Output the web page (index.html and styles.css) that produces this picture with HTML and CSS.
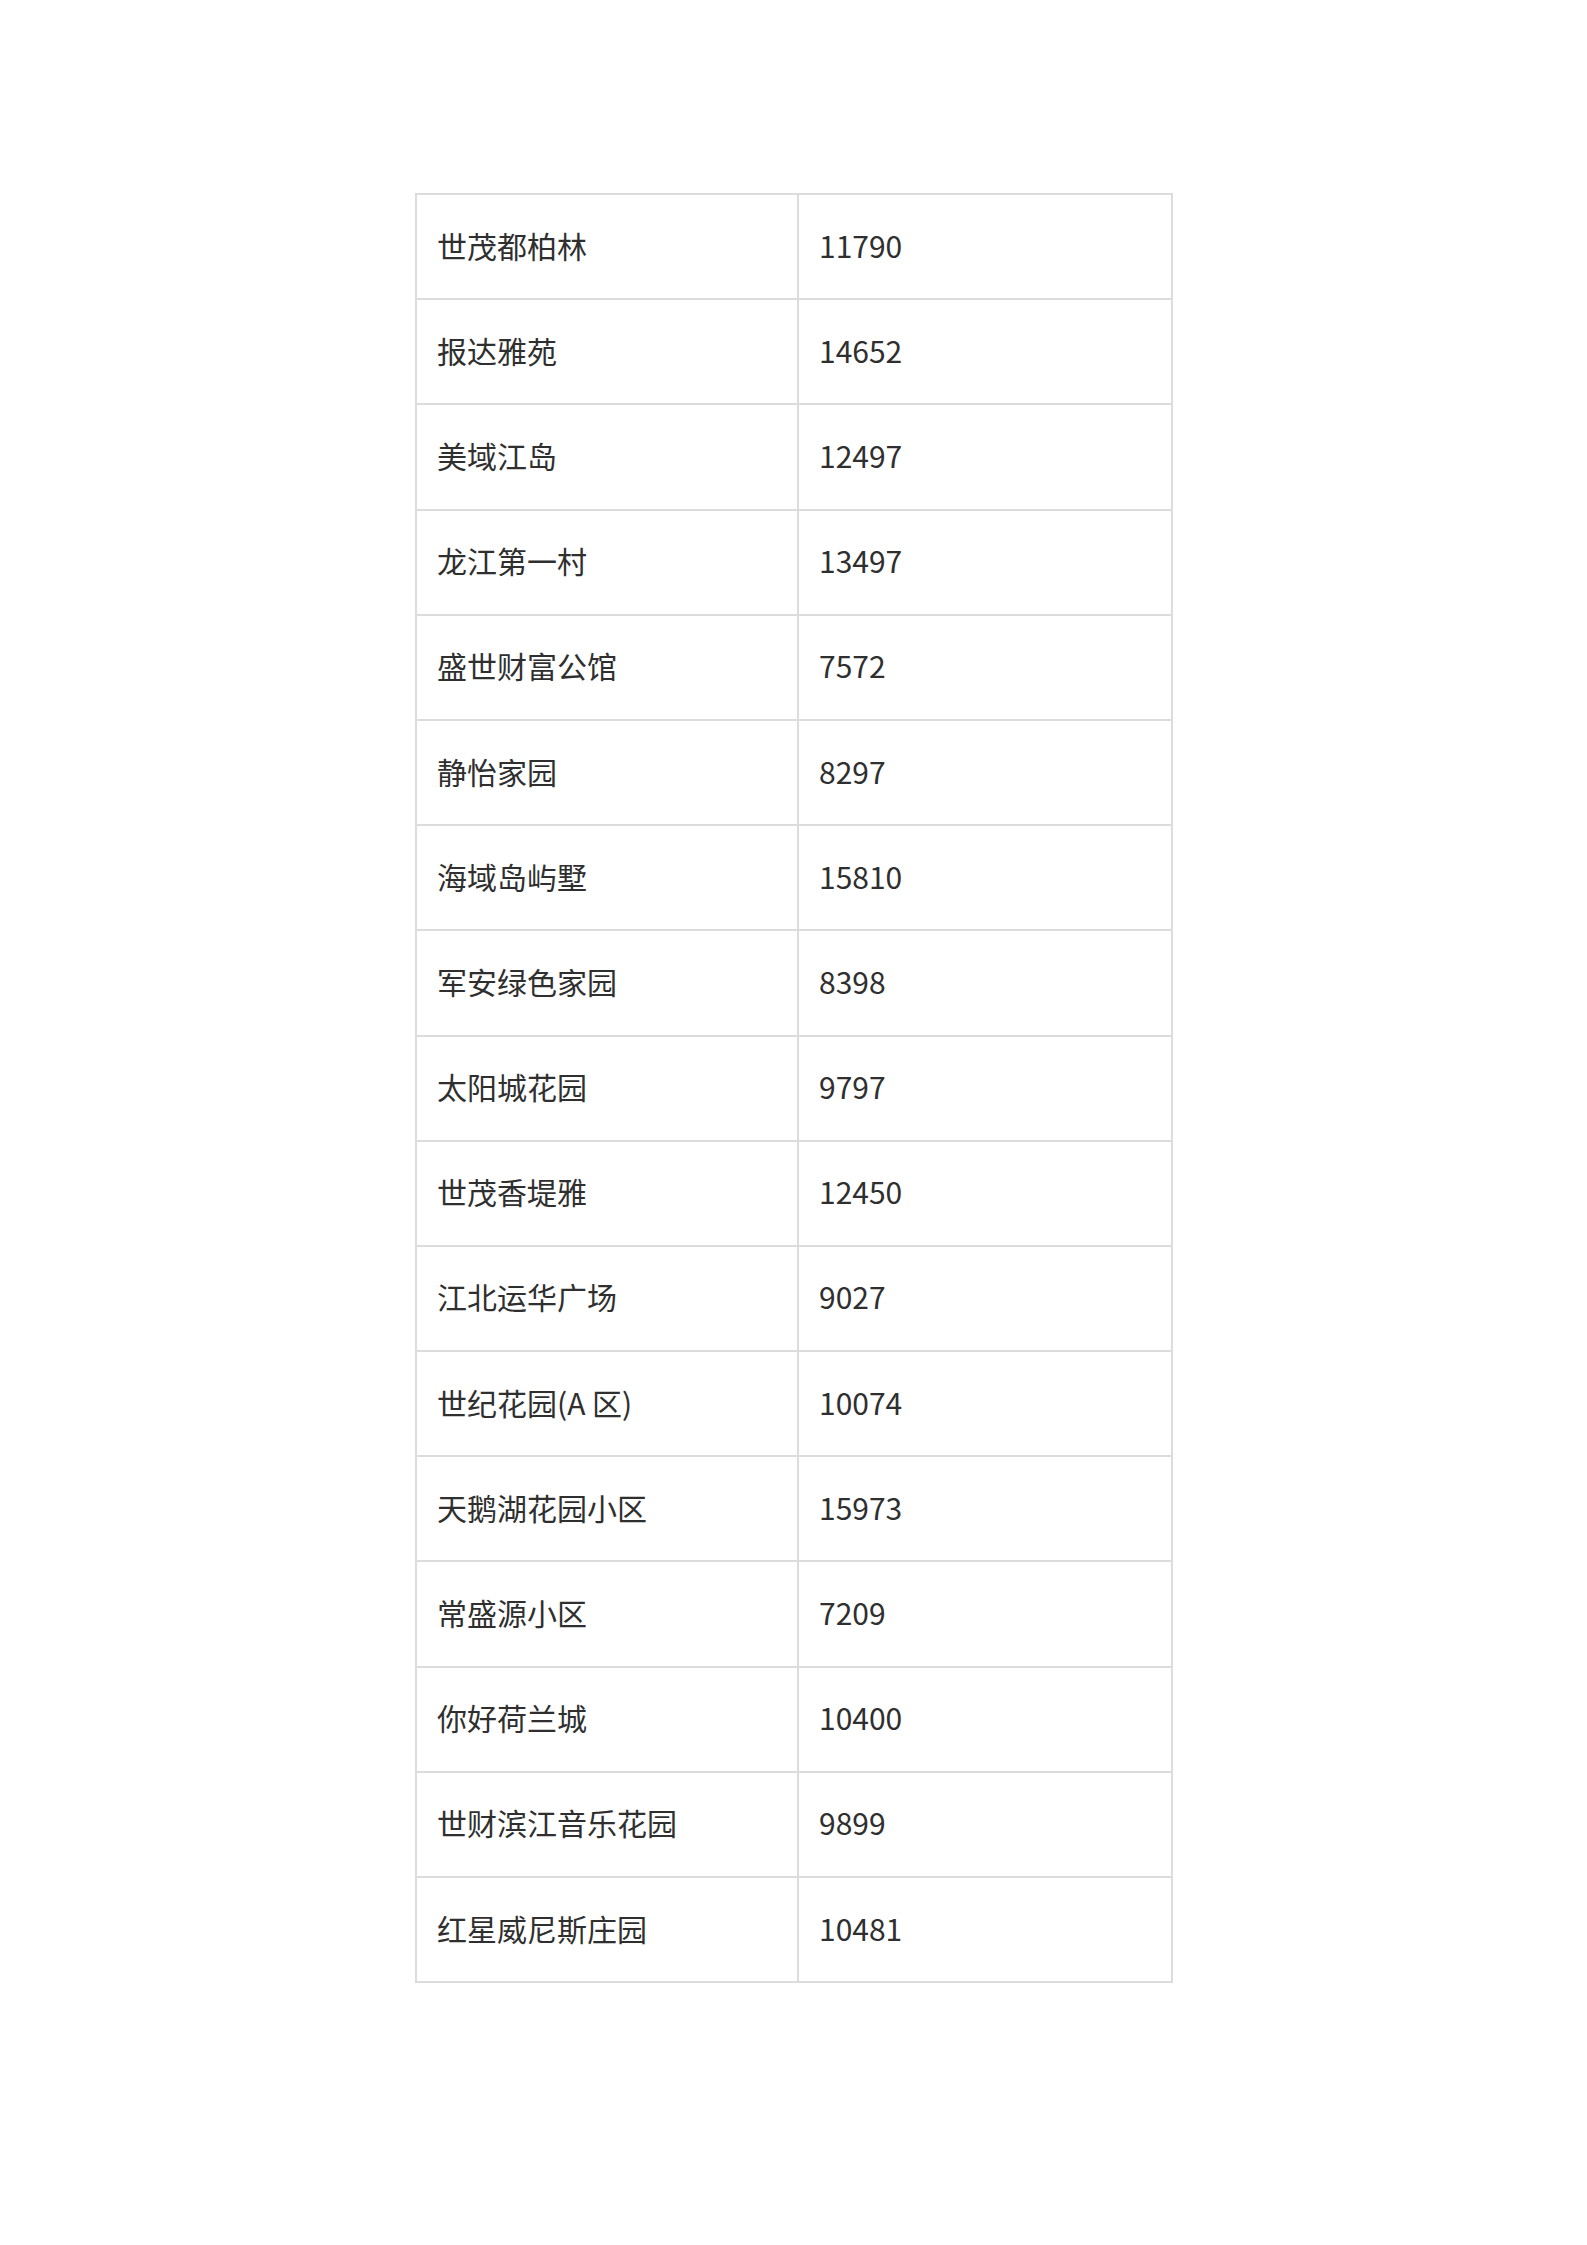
FILE: index.html
```html
<!DOCTYPE html>
<html lang="zh">
<head>
<meta charset="utf-8">
<title>小区价格</title>
<link rel="stylesheet" href="styles.css">
</head>
<body>
<div class="page">
<table class="price-table">
<colgroup><col class="c1"><col class="c2"></colgroup>
<tbody>
<tr><td>世茂都柏林</td><td>11790</td></tr>
<tr><td>报达雅苑</td><td>14652</td></tr>
<tr><td>美域江岛</td><td>12497</td></tr>
<tr><td>龙江第一村</td><td>13497</td></tr>
<tr><td>盛世财富公馆</td><td>7572</td></tr>
<tr><td>静怡家园</td><td>8297</td></tr>
<tr><td>海域岛屿墅</td><td>15810</td></tr>
<tr><td>军安绿色家园</td><td>8398</td></tr>
<tr><td>太阳城花园</td><td>9797</td></tr>
<tr><td>世茂香堤雅</td><td>12450</td></tr>
<tr><td>江北运华广场</td><td>9027</td></tr>
<tr><td>世纪花园(A 区)</td><td>10074</td></tr>
<tr><td>天鹅湖花园小区</td><td>15973</td></tr>
<tr><td>常盛源小区</td><td>7209</td></tr>
<tr><td>你好荷兰城</td><td>10400</td></tr>
<tr><td>世财滨江音乐花园</td><td>9899</td></tr>
<tr><td>红星威尼斯庄园</td><td>10481</td></tr>
</tbody>
</table>
</div>
</body>
</html>
```
FILE: styles.css
```css
html, body {
  margin: 0;
  padding: 0;
  background: #ffffff;
}
.page {
  padding: 193px 0 0 415px;
}
.price-table {
  border-collapse: collapse;
  table-layout: fixed;
  width: 756px;
  font-family: "Noto Sans CJK SC", "Microsoft YaHei", sans-serif;
  font-size: 30px;
  color: #2f2f2f;
}
.c1 { width: 382px; }
.c2 { width: 374px; }
.price-table td {
  border: 2px solid #dcdcdc;
  height: 105.2px;
  padding: 0 20px 4px 20px;
  box-sizing: border-box;
  vertical-align: middle;
  line-height: 1.2;
  white-space: nowrap;
}
```
